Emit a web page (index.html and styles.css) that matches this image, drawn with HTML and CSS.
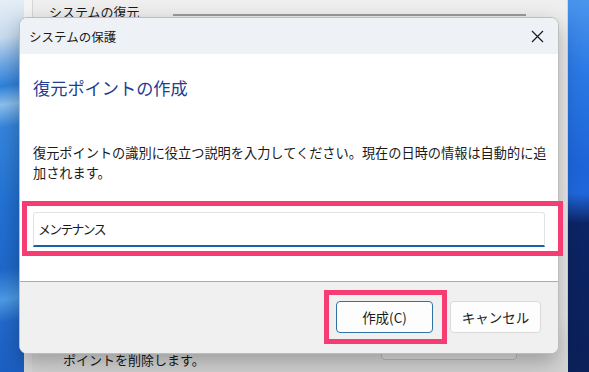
FILE: index.html
```html
<!DOCTYPE html>
<html lang="ja">
<head>
    <meta charset="UTF-8">
    <title>システムの保護</title>
    <link rel="stylesheet" href="styles.css">
</head>
<body>
    <div class="desktop">
        <div class="wall-left"></div>

        <div class="parent-win">
            <div class="parent-side"></div>
            <div class="parent-body">
                <div class="parent-top">
                    <span class="group-label">システムの復元</span>
                    <span class="group-line"></span>
                </div>
                <div class="parent-bottom">
                    <p class="parent-text">このドライブのすべての復元<br>ポイントを削除します。</p>
                    <span class="parent-btn"></span>
                </div>
            </div>
        </div>

        <div class="wall-right"></div>

        <div class="dialog">
            <div class="titlebar">
                <span class="title">システムの保護</span>
                <svg class="close" width="13" height="13" viewBox="0 0 13 13">
                    <path d="M1 1 L12 12 M12 1 L1 12" stroke="#1b1b1b" stroke-width="1.2" fill="none"/>
                </svg>
            </div>

            <div class="content">
                <h1 class="heading">復元ポイントの作成</h1>
                <p class="desc">復元ポイントの識別に役立つ説明を入力してください。現在の日時の情報は自動的に追<br>加されます。</p>
                <div class="field">
                    <div class="input">メンテナンス</div>
                    <span class="mark mark-input"></span>
                </div>
            </div>

            <div class="footer">
                <div class="btn-wrap">
                    <button class="btn btn-primary">作成(C)</button>
                    <span class="mark mark-btn"></span>
                </div>
                <button class="btn">キャンセル</button>
            </div>
        </div>
    </div>
</body>
</html>
```

FILE: styles.css
```css
* {
    box-sizing: border-box;
}
body {
    margin: 0;
    font-family: "Noto Sans CJK JP", "Noto Sans", sans-serif;
    color: #1a1a1a;
}
.desktop {
    display: grid;
    grid-template-columns: 24px 544px 1fr;
    grid-template-rows: 372px;
    width: 589px;
    height: 372px;
    overflow: hidden;
}

/* wallpaper */
.wall-left {
    grid-column: 1;
    grid-row: 1;
    background: linear-gradient(172deg, #e6eef6 0%, #c9ddf0 10%, #6fa9e6 17%, #2f82dc 23%, #8cc0ee 28%, #3585dc 34%, #2271d4 55%, #1f69cc 72%, #4e9be6 80%, #2269cc 86%, #1b5ec2 100%);
}
.wall-right {
    grid-column: 3;
    grid-row: 1;
    background:
        linear-gradient(180deg, transparent 0%, transparent 52%, rgba(8, 24, 80, 0.85) 60%, rgba(8, 22, 74, 0.9) 100%),
        linear-gradient(200deg, #4a95ec 0%, #2a78e4 20%, #1c64d8 45%, #2f7be6 100%);
}

/* window behind the dialog */
.parent-win {
    grid-column: 2;
    grid-row: 1;
    display: grid;
    grid-template-columns: 9px 1fr;
    background: linear-gradient(180deg, #efefef 0%, #ececec 85%, #d4d4d4 100%);
    border-right: 1px solid #d6d6d6;
}
.parent-side {
    background: linear-gradient(180deg, #f5f5f5 0%, #f0f0f0 85%, #d8d8d8 100%);
    border-right: 1px solid #d6d6d6;
}
.parent-body {
    display: flex;
    flex-direction: column;
    justify-content: space-between;
}
.parent-top {
    display: flex;
    align-items: flex-start;
    padding-top: 3px;
}
.group-label {
    margin-left: 16px;
    font-size: 13px;
    line-height: 18px;
}
.group-line {
    margin: 11px 0 0 33px;
    width: 353px;
    height: 2px;
    background: #9c9c9c;
}
.parent-bottom {
    display: flex;
    align-items: flex-start;
    padding-bottom: 2px;
}
.parent-text {
    margin: 0 0 0 30px;
    font-size: 13px;
    line-height: 20px;
    width: 318px;
}
.parent-btn {
    width: 136px;
    height: 30px;
    border: 1px solid #bdbdbd;
    border-radius: 4px;
    background: #e4e4e4;
}

/* dialog */
.dialog {
    grid-column: 1 / 4;
    grid-row: 1;
    align-self: start;
    margin: 17px 0 0 19px;
    width: 540px;
    height: 337px;
    display: flex;
    flex-direction: column;
    border: 1px solid #bdbdbd;
    border-radius: 8px;
    background: #fff;
    box-shadow: 0 8px 22px rgba(0, 0, 0, 0.3);
}
.titlebar {
    display: flex;
    align-items: center;
    justify-content: space-between;
    height: 36px;
    padding: 0 14px 0 9px;
    background: #eef2f7;
    border-radius: 7px 7px 0 0;
}
.title {
    font-size: 12.5px;
}
.content {
    flex: 1;
    padding: 22px 13px 0;
    background: #fff;
}
.heading {
    margin: 0;
    font-size: 17.2px;
    font-weight: normal;
    line-height: 24px;
    color: #1c3d92;
}
.desc {
    margin: 43px 0 0;
    font-size: 13.2px;
    line-height: 20px;
    white-space: nowrap;
}
.field {
    position: relative;
    margin-top: 29px;
}
.input {
    height: 35px;
    padding: 0 0 0 4px;
    border: 1px solid #e3e3e3;
    border-bottom: 2px solid #1662ad;
    border-radius: 3px 3px 0 0;
    font-size: 12.8px;
    letter-spacing: -1.6px;
    line-height: 32px;
}
.footer {
    display: flex;
    justify-content: flex-end;
    align-items: flex-start;
    gap: 17px;
    height: 72px;
    padding: 19px 17px 0 0;
    background: #f0f0f0;
    border-top: 1px solid #ababab;
    border-radius: 0 0 7px 7px;
}
.btn-wrap {
    position: relative;
    display: flex;
}
.btn {
    height: 32px;
    width: 91px;
    border: 1px solid #dadada;
    border-radius: 4px;
    background: #fdfdfd;
    font-family: inherit;
    font-size: 13.5px;
    color: #1a1a1a;
}
.btn-primary {
    width: 97px;
    border-color: #2f72a3;
}

/* pink annotations */
.mark {
    position: absolute;
    border: 5px solid #f53d74;
}
.mark-input {
    left: -11px;
    top: -11px;
    right: -18px;
    bottom: -9px;
}
.mark-btn {
    left: -12px;
    top: -11px;
    right: -14px;
    bottom: -11px;
}
```
